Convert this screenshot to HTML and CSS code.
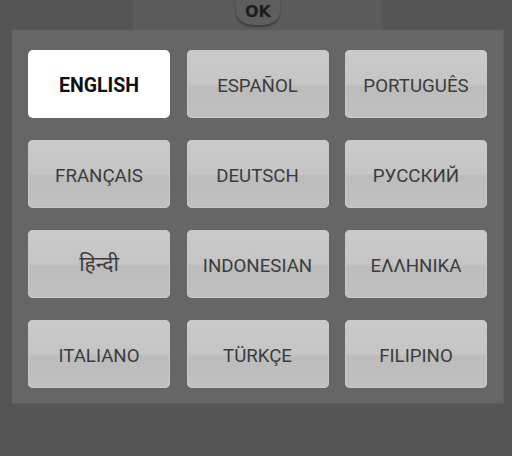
FILE: index.html
```html
<!DOCTYPE html>
<html>
<head>
<meta charset="utf-8">
<link rel="stylesheet" href="styles.css">
</head>
<body>
<div class="top">
  <div class="tab"><div class="ok">OK</div></div>
</div>
<div class="panel">
  <div class="grid">
    <div class="btn active">ENGLISH</div>
    <div class="btn">ESPAÑOL</div>
    <div class="btn">PORTUGUÊS</div>
    <div class="btn">FRANÇAIS</div>
    <div class="btn">DEUTSCH</div>
    <div class="btn">РУССКИЙ</div>
    <div class="btn hindi">हिन्दी</div>
    <div class="btn">INDONESIAN</div>
    <div class="btn">ΕΛΛΗΝΙΚΑ</div>
    <div class="btn">ITALIANO</div>
    <div class="btn">TÜRKÇE</div>
    <div class="btn">FILIPINO</div>
  </div>
</div>
</body>
</html>
```
FILE: styles.css
```css
html, body {
  margin: 0;
  padding: 0;
  background: #555555;
  width: 512px;
  height: 456px;
  overflow: hidden;
  font-family: Roboto, "Noto Sans", sans-serif;
}
.top {
  height: 30px;
  display: flex;
}
.tab {
  margin-left: 133px;
  width: 249px;
  height: 30px;
  background: #5b5b5b;
  position: relative;
}
.ok {
  position: absolute;
  left: 103px;
  top: -4px;
  width: 44px;
  height: 29px;
  border-radius: 0 0 18px 18px / 0 0 13px 13px;
  background: #5e5e5e;
  box-shadow: 0 2px 2px rgba(0,0,0,0.35);
  color: #1c1c1c;
  font-family: "DejaVu Sans", sans-serif;
  font-weight: bold;
  font-size: 16px;
  display: flex;
  align-items: center;
  justify-content: center;
  padding-top: 1px;
  box-sizing: border-box;
}
.panel {
  margin-left: 12px;
  width: 491px;
  height: 373px;
  background: #666666;
  box-sizing: border-box;
  padding: 20px 16px 15px 16px;
  box-shadow: 1px 1px 0 #5e5e5e;
}
.grid {
  display: grid;
  grid-template-columns: repeat(3, 142px);
  grid-auto-rows: 68px;
  justify-content: space-between;
  row-gap: 22px;
}
.btn {
  border-radius: 5px;
  background: linear-gradient(#cacaca, #c5c5c5 50%, #bcbcbc 53%, #c0c0c0);
  box-shadow: inset 0 0 0 1px #c9c9c9;
  color: #3c3c3c;
  font-size: 18.7px;
  display: flex;
  align-items: center;
  justify-content: center;
  padding-top: 3px;
  box-sizing: border-box;
}
.btn.hindi {
  font-size: 21px;
  padding-top: 0;
  padding-bottom: 2px;
}
.btn.active {
  background: #ffffff;
  box-shadow: none;
  color: #111111;
  font-size: 19.5px;
  font-weight: bold;
}
```
